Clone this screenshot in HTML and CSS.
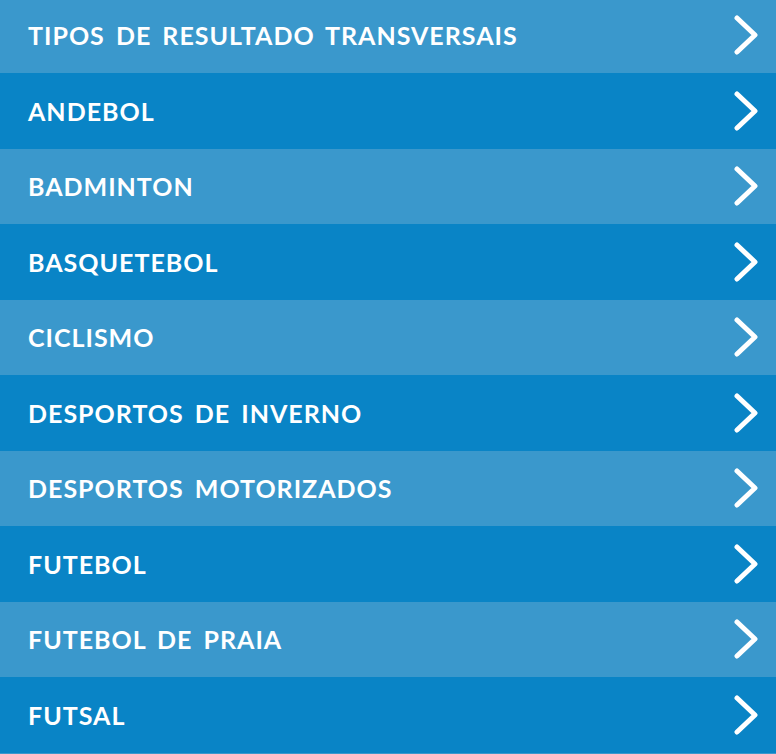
FILE: index.html
```html
<!DOCTYPE html>
<html lang="pt">
<head>
    <meta charset="UTF-8">
    <title>Modalidades</title>
    <meta name="viewport" content="width=device-width,initial-scale=1.0">
    <link rel="stylesheet" href="styles.css">
</head>
<body>
<ul class="sport-list">
    <li class="sport-item"><span class="sport-name">TIPOS DE RESULTADO TRANSVERSAIS</span><svg class="sport-arrow" viewBox="0 0 24 40"><path d="M3 3 L21 20 L3 37"/></svg></li>
    <li class="sport-item"><span class="sport-name">ANDEBOL</span><svg class="sport-arrow" viewBox="0 0 24 40"><path d="M3 3 L21 20 L3 37"/></svg></li>
    <li class="sport-item"><span class="sport-name">BADMINTON</span><svg class="sport-arrow" viewBox="0 0 24 40"><path d="M3 3 L21 20 L3 37"/></svg></li>
    <li class="sport-item"><span class="sport-name">BASQUETEBOL</span><svg class="sport-arrow" viewBox="0 0 24 40"><path d="M3 3 L21 20 L3 37"/></svg></li>
    <li class="sport-item"><span class="sport-name">CICLISMO</span><svg class="sport-arrow" viewBox="0 0 24 40"><path d="M3 3 L21 20 L3 37"/></svg></li>
    <li class="sport-item"><span class="sport-name">DESPORTOS DE INVERNO</span><svg class="sport-arrow" viewBox="0 0 24 40"><path d="M3 3 L21 20 L3 37"/></svg></li>
    <li class="sport-item"><span class="sport-name">DESPORTOS MOTORIZADOS</span><svg class="sport-arrow" viewBox="0 0 24 40"><path d="M3 3 L21 20 L3 37"/></svg></li>
    <li class="sport-item"><span class="sport-name">FUTEBOL</span><svg class="sport-arrow" viewBox="0 0 24 40"><path d="M3 3 L21 20 L3 37"/></svg></li>
    <li class="sport-item"><span class="sport-name">FUTEBOL DE PRAIA</span><svg class="sport-arrow" viewBox="0 0 24 40"><path d="M3 3 L21 20 L3 37"/></svg></li>
    <li class="sport-item"><span class="sport-name">FUTSAL</span><svg class="sport-arrow" viewBox="0 0 24 40"><path d="M3 3 L21 20 L3 37"/></svg></li>
</ul>
</body>
</html>
```
FILE: styles.css
```css
*{
    margin: 0;
    padding: 0;
}
html,body{
    height: 100%;
    overflow: hidden;
    background: #3a98cc;
}
.sport-list{
    list-style-type: none;
    margin-top: -2.5px;
}
.sport-item{
    display: flex;
    align-items: center;
    justify-content: space-between;
    height: 75.5px;
    padding: 0 18px 0 28px;
    background: #3a98cc;
    font-family: Lato, "Open Sans", sans-serif;
    font-weight: bold;
    font-size: 25px;
    letter-spacing: 1px;
    word-spacing: 4px;
    color: #fff;
}
.sport-item:nth-child(even){
    background: #0984c6;
}
.sport-arrow{
    width: 24px;
    height: 40px;
    fill: none;
    stroke: #fff;
    stroke-width: 5;
    stroke-linecap: round;
    stroke-linejoin: round;
}
```
